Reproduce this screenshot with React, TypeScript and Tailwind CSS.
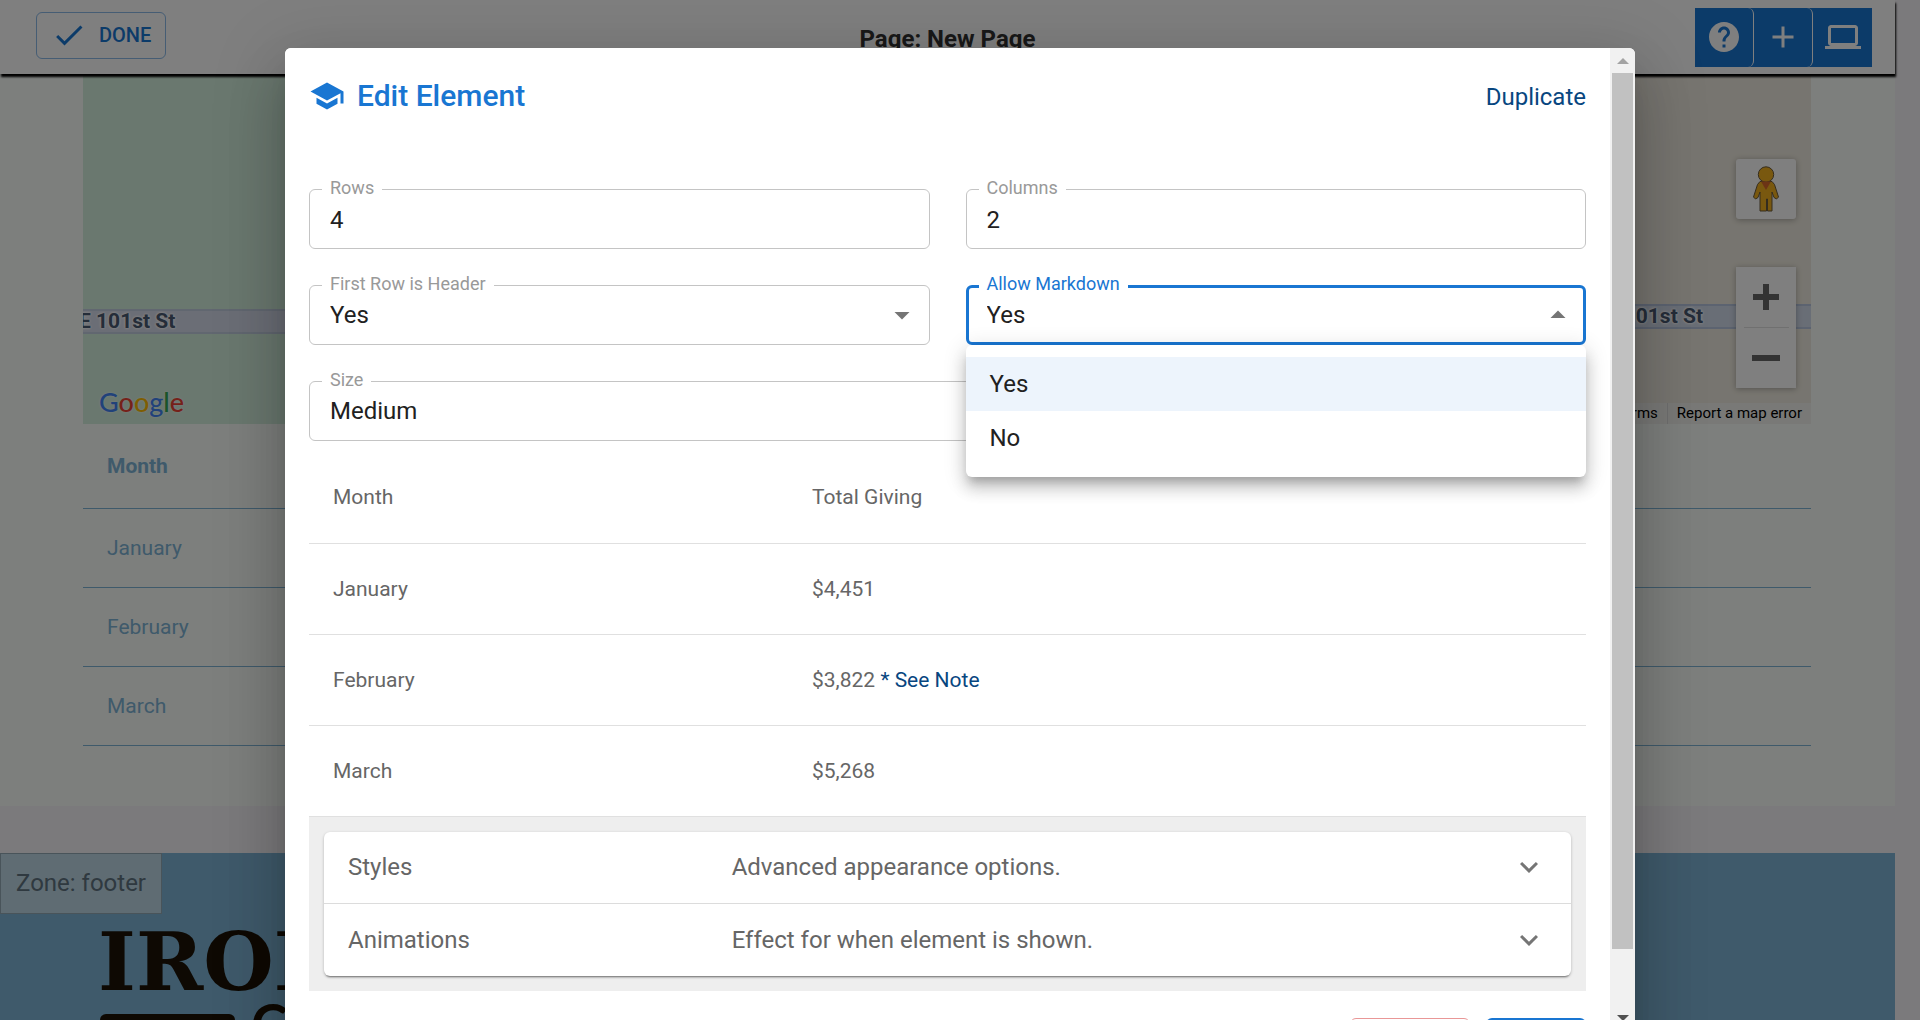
import React, { useState } from 'react';
import {
  MdAdd,
  MdArrowDropDown,
  MdArrowDropUp,
  MdDone,
  MdExpandMore,
  MdHelp,
  MdLaptop,
  MdSchool,
} from 'react-icons/md';

const giving = [
  { month: 'Month', total: 'Total Giving', note: false },
  { month: 'January', total: '$4,451', note: false },
  { month: 'February', total: '$3,822', note: true },
  { month: 'March', total: '$5,268', note: false },
];

function Toolbar() {
  return (
    <header className="relative z-10 mr-[25px] grid h-[74px] grid-cols-[1fr_auto_1fr] items-center bg-white px-[23px] shadow-[1px_3px_2px_#000]">
      <button
        type="button"
        className="mb-1 ml-[13px] flex h-[47px] w-[130px] items-center gap-3 rounded-md border border-[#1976d2]/50 pl-[14px] text-[20px] font-medium text-[#1976d2]"
      >
        <MdDone className="size-9 shrink-0" />
        DONE
      </button>
      <h1 className="pt-1 text-[24px] leading-9 font-bold text-[#333]">Page: New Page</h1>
      <div className="flex justify-self-end bg-[#1976d2] text-white">
        <button type="button" aria-label="Help" className="grid h-[59px] w-[59px] place-items-center rounded-md border-r border-white">
          <MdHelp className="size-9" />
        </button>
        <button type="button" aria-label="Add content" className="grid h-[59px] w-[59px] place-items-center rounded-md border-r border-white">
          <MdAdd className="size-9" />
        </button>
        <button type="button" aria-label="Desktop preview" className="grid h-[59px] w-[59px] place-items-center">
          <MdLaptop className="size-9" />
        </button>
      </div>
    </header>
  );
}

function Pegman() {
  return (
    <svg viewBox="0 0 26 46" className="h-[46px] w-[26px]" aria-hidden="true">
      <g stroke="#6b5a3c" strokeWidth="1">
        <path d="M7 15.500h12l2.500 3 4 12.500-2 2-2.500-1.500-2-5.500v19h-4.500V33h-1v12H7V26l-2 5.500L2.500 33l-2-2 4-12.500z" fill="#f2b01e" />
        <circle cx="13" cy="8.500" r="7.700" fill="#f2b01e" />
      </g>
      <path d="M8 15.500h10L13 24z" fill="#d9682a" />
    </svg>
  );
}

function MapBlock() {
  return (
    <div className="relative h-[350px] overflow-hidden bg-[linear-gradient(90deg,#d5f1df_50%,#efebe0_50%)]">
      <div className="absolute top-[235px] left-0 h-[25px] w-1/2 border-y-2 border-[#c3cfe0] bg-[#d7dcec]" />
      <div className="absolute top-[230px] right-0 h-[25px] w-1/2 border-y-2 border-[#b9c7e0] bg-[#d3dcec]" />
      <span className="absolute top-[233px] -left-1 text-[21px] leading-7 font-bold text-[#4a5a72] [text-shadow:0_0_3px_#fff,0_0_3px_#fff,0_0_2px_#fff]">
        E 101st St
      </span>
      <span className="absolute top-[228px] right-[108px] text-[21px] leading-7 font-bold text-[#4a5a72] [text-shadow:0_0_3px_#fff,0_0_3px_#fff,0_0_2px_#fff]">
        E 101st St
      </span>
      <div className="absolute bottom-1 left-4 font-[Lato,sans-serif] text-[27px] leading-9 font-medium [text-shadow:0_0_2px_#fff]">
        <span className="text-[#4285f4]">G</span>
        <span className="text-[#ea4335]">o</span>
        <span className="text-[#fbbc05]">o</span>
        <span className="text-[#4285f4]">g</span>
        <span className="text-[#34a853]">l</span>
        <span className="text-[#ea4335]">e</span>
      </div>
      <button type="button" aria-label="Street View" className="absolute top-[85px] right-[15px] grid size-[60px] place-items-center rounded-[3px] bg-white shadow-[0_1px_6px_rgba(0,0,0,0.3)]">
        <Pegman />
      </button>
      <div className="absolute top-[193px] right-[15px] flex w-[60px] flex-col items-center bg-white shadow-[0_1px_6px_rgba(0,0,0,0.3)]">
        <button type="button" aria-label="Zoom in" className="grid h-[60px] w-full place-items-center">
          <svg viewBox="0 0 26 26" className="size-[26px]" fill="#666">
            <path d="M10 0h6v10h10v6H16v10h-6V16H0v-6h10z" />
          </svg>
        </button>
        <div className="h-px w-[45px] bg-[#e0e0e0]" />
        <button type="button" aria-label="Zoom out" className="grid h-[60px] w-full place-items-center">
          <svg viewBox="0 0 28 6" className="h-[6px] w-7" fill="#666">
            <path d="M0 0h28v6H0z" />
          </svg>
        </button>
      </div>
      <div className="absolute right-0 bottom-0 flex h-[21px] items-center bg-[#f5f5f5]/70 text-[15px] leading-[21px] text-black">
        <a href="#terms" className="px-[9px]">Terms</a>
        <a href="#report" className="border-l border-[#ddd] px-[9px]">Report a map error</a>
      </div>
    </div>
  );
}

function SitePage() {
  return (
    <div className="absolute inset-0 isolate overflow-hidden bg-[#f6f4f8]">
      <Toolbar />
      <div className="mr-[25px] bg-[#fafefb] pr-[84px] pb-[60px] pl-[83px]">
        <MapBlock />
        <table className="w-full text-left text-[21px] leading-8 text-[#7eb4d6]">
          <tbody>
            {giving.map((row, i) => (
              <tr key={row.month} className={i === 0 ? 'h-[84px] border-b border-[#7eb4d6] font-bold' : 'h-[79px] border-b border-[#7eb4d6]'}>
                <td className="w-1/2 px-6">{row.month}</td>
                <td className="px-6">{row.total}</td>
              </tr>
            ))}
          </tbody>
        </table>
      </div>
      <footer className="mt-[47px] mr-[25px] h-[200px] bg-[#7eb4d6]">
        <div className="flex h-[61px] w-fit items-center border border-[#92a9b5] bg-[#bed9e6] px-[15px] text-[24px] text-[#5f7280]">
          Zone: footer
        </div>
        <div className="pt-3 pl-[98px] text-[#1c1206]">
          <div className="font-['DejaVu_Serif',serif] text-[81px] leading-[72px] font-bold">IRON</div>
          <div className="flex items-start gap-4 pl-0.5">
            <div className="mt-4 h-5 w-[135px] rounded-md bg-[#1c1206]" />
            <div className="pt-[5px] font-[Lato,sans-serif] text-[56px] leading-10 font-bold">C</div>
          </div>
        </div>
      </footer>
    </div>
  );
}

function TextField({ id, label, initial }: { id: string; label: string; initial: string }) {
  const [value, setValue] = useState(initial);
  return (
    <div className="relative">
      <label htmlFor={id} className="absolute -top-[13px] left-[13px] bg-white px-2 text-[18px] leading-6 text-[#999]">
        {label}
      </label>
      <input
        id={id}
        value={value}
        onChange={(e) => setValue(e.target.value)}
        className="block h-[60px] w-full rounded-md border border-[#c4c4c4] px-5 pt-0.5 text-[24px] text-[#212121] outline-none"
      />
    </div>
  );
}

function SelectField({
  id,
  label,
  options,
  open = false,
}: {
  id: string;
  label: string;
  options: string[];
  open?: boolean;
}) {
  return (
    <div className="relative">
      <label
        htmlFor={id}
        className={
          open
            ? 'absolute -top-[13px] left-[13px] bg-white px-2 text-[18px] leading-6 text-[#1976d2]'
            : 'absolute -top-[13px] left-[13px] bg-white px-2 text-[18px] leading-6 text-[#999]'
        }
      >
        {label}
      </label>
      <select
        id={id}
        defaultValue={options[0]}
        className={
          open
            ? 'block h-[60px] w-full appearance-none rounded-md border-3 border-[#1976d2] bg-white px-[18px] text-[24px] text-[#212121] outline-none'
            : 'block h-[60px] w-full appearance-none rounded-md border border-[#c4c4c4] bg-white px-5 text-[24px] text-[#212121] outline-none'
        }
      >
        {options.map((o) => (
          <option key={o}>{o}</option>
        ))}
      </select>
      {open ? (
        <MdArrowDropUp className="pointer-events-none absolute top-3 right-[10px] size-9 text-[#757575]" />
      ) : (
        <MdArrowDropDown className="pointer-events-none absolute top-3 right-[10px] size-9 text-[#757575]" />
      )}
      {open && (
        <ul
          role="listbox"
          aria-label={label}
          className="absolute top-full right-0 left-0 z-10 rounded-md bg-white py-3 text-[24px] leading-[54px] text-[#212121] shadow-[0_8px_8px_-4px_rgba(0,0,0,0.2),0_12px_15px_1px_rgba(0,0,0,0.14),0_4px_21px_3px_rgba(0,0,0,0.12)]"
        >
          {options.map((o, i) => (
            <li key={o} role="option" aria-selected={i === 0} className={i === 0 ? 'bg-[#edf4fc] px-6' : 'px-6'}>
              {o}
            </li>
          ))}
        </ul>
      )}
    </div>
  );
}

function AccordionRow({ title, detail }: { title: string; detail: string }) {
  return (
    <button type="button" aria-expanded="false" className="flex h-[72px] w-full items-center px-6 text-left text-[24px] text-[#666]">
      <span className="w-[32%]">{title}</span>
      <span className="flex-1">{detail}</span>
      <MdExpandMore className="size-9 text-[#757575]" />
    </button>
  );
}

function ScrollRail() {
  return (
    <div aria-hidden="true" className="flex w-[25px] shrink-0 flex-col items-center bg-[#f1f1f1]">
      <div className="grid h-[25px] place-items-center">
        <svg viewBox="0 0 12 6" className="h-[6px] w-3" fill="#a3a3a3">
          <path d="M6 0l6 6H0z" />
        </svg>
      </div>
      <div className="h-[876px] w-[21px] bg-[#c1c1c1]" />
      <div className="h-[56px]" />
      <div className="grid h-[25px] place-items-center">
        <svg viewBox="0 0 12 6" className="h-[6px] w-3" fill="#505050">
          <path d="M0 0h12L6 6z" />
        </svg>
      </div>
    </div>
  );
}

function EditDialog() {
  return (
    <div
      role="dialog"
      aria-modal="true"
      aria-labelledby="dialog-title"
      className="mt-12 flex w-full max-w-[1350px] overflow-hidden rounded-md bg-white shadow-[0_16px_22px_-10px_rgba(0,0,0,0.2),0_36px_57px_4px_rgba(0,0,0,0.14),0_13px_69px_12px_rgba(0,0,0,0.12)]"
    >
      <div className="flex-1 bg-white px-6 pt-6">
        <div className="flex h-12 items-center">
          <MdSchool className="mr-3 size-9 text-[#1976d2]" />
          <h2 id="dialog-title" className="flex-1 text-[30px] leading-9 font-medium text-[#1976d2]">
            Edit Element
          </h2>
          <a href="#duplicate" className="pt-0.5 text-[24px] leading-9 text-[#08467f]">
            Duplicate
          </a>
        </div>
        <div className="mt-[69px] grid grid-cols-2 gap-9">
          <TextField id="rows" label="Rows" initial="4" />
          <TextField id="columns" label="Columns" initial="2" />
          <SelectField id="header-row" label="First Row is Header" options={['Yes', 'No']} />
          <SelectField id="markdown" label="Allow Markdown" options={['Yes', 'No']} open />
          <div className="col-span-2">
            <SelectField id="size" label="Size" options={['Medium', 'Small']} />
          </div>
        </div>
        <table className="mt-[11px] w-full table-fixed text-left text-[21px] leading-8 text-[#666]">
          <tbody>
            {giving.map((row) => (
              <tr key={row.month} className="h-[91px] border-b border-[#e0e0e0]">
                <td className="w-[479px] px-6">{row.month}</td>
                <td className="px-6">
                  {row.total}
                  {row.note && (
                    <>
                      {' '}
                      <a href="#note" className="text-[#08467f]">* See Note</a>
                    </>
                  )}
                </td>
              </tr>
            ))}
          </tbody>
        </table>
        <div className="bg-[#eee] p-[15px]">
          <div className="divide-y divide-[#dcdcdc] rounded-md bg-white shadow-[0_3px_2px_-2px_rgba(0,0,0,0.4),0_1px_3px_rgba(0,0,0,0.25)]">
            <AccordionRow title="Styles" detail="Advanced appearance options." />
            <AccordionRow title="Animations" detail="Effect for when element is shown." />
          </div>
        </div>
        <div className="flex justify-end gap-4 pt-[27px]">
          <button type="button" aria-label="Delete" className="h-14 w-[120px] rounded-md border border-[#d32f2f]/50" />
          <button type="button" aria-label="Save" className="h-14 w-[100px] rounded-md bg-[#1976d2]" />
        </div>
      </div>
      <ScrollRail />
    </div>
  );
}

export default function App() {
  return (
    <div className="relative h-screen overflow-hidden font-[Roboto,sans-serif]">
      <SitePage />
      <div className="absolute inset-0 flex items-start justify-center overflow-hidden bg-black/50">
        <EditDialog />
      </div>
    </div>
  );
}
